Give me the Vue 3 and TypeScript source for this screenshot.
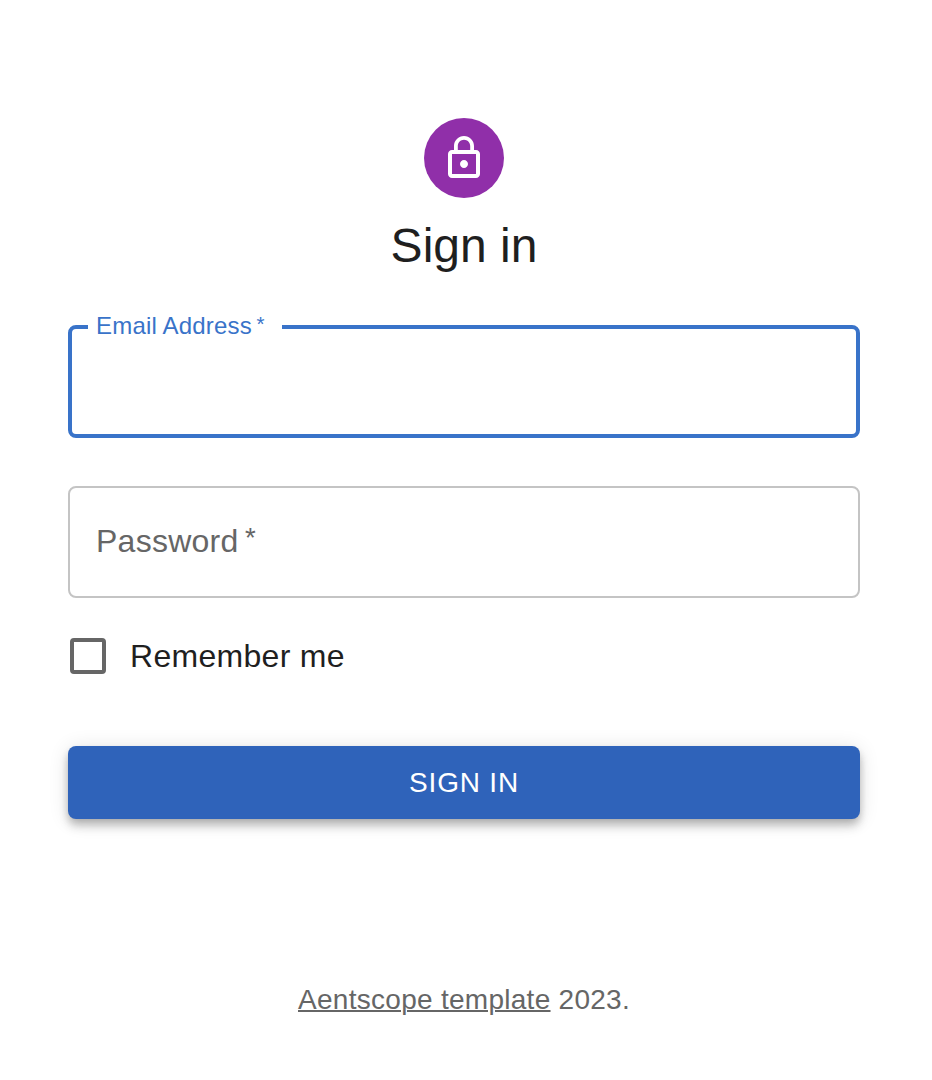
<script setup lang="ts">
import { ref } from 'vue'

const email = ref<string>('')
const password = ref<string>('')
const remember = ref<boolean>(false)
</script>

<template>
  <main class="page">
    <div class="avatar">
      <svg viewBox="0 0 24 24" aria-hidden="true">
        <path d="M12 17c1.100 0 2-.9 2-2s-.9-2-2-2-2 .9-2 2 .9 2 2 2zm6-9h-1V6c0-2.760-2.240-5-5-5S7 3.240 7 6v2H6c-1.100 0-2 .9-2 2v10c0 1.100.9 2 2 2h12c1.100 0 2-.9 2-2V10c0-1.100-.9-2-2-2zM8.900 6c0-1.710 1.390-3.100 3.100-3.100s3.100 1.390 3.100 3.100v2H8.900V6zM18 20H6V10h12v10z" />
      </svg>
    </div>
    <h1 class="title">Sign in</h1>
    <form class="form" @submit.prevent>
      <div class="field active">
        <label class="float" for="email"><span class="text">Email Address</span><span class="star">*</span></label>
        <input id="email" v-model="email" type="email" />
      </div>
      <div class="field idle">
        <label class="inside" for="password"><span class="text">Password</span><span class="star">*</span></label>
        <input id="password" v-model="password" type="password" />
      </div>
      <label class="remember">
        <input v-model="remember" class="check" type="checkbox" />
        <span class="remember-text">Remember me</span>
      </label>
      <button class="submit" type="submit"><span class="submit-text">SIGN IN</span></button>
    </form>
    <footer class="footer"><a class="link">Aentscope template</a><span class="year">2023.</span></footer>
  </main>
</template>

<style>
body {
  margin: 0;
  background: #fff;
}
</style>

<style scoped>
.page {
  box-sizing: border-box;
  width: 932px;
  height: 1080px;
  padding: 118px 72px 0 68px;
  display: flex;
  flex-direction: column;
  align-items: center;
  font-family: "Liberation Sans", Arial, sans-serif;
  color: #1f1f1f;
  overflow: hidden;
}
.avatar {
  width: 80px;
  height: 80px;
  border-radius: 50%;
  background: #902fa9;
  display: flex;
  align-items: center;
  justify-content: center;
}
.avatar svg {
  width: 48px;
  height: 48px;
  fill: #fff;
}
.title {
  margin: 16px 0 0;
  font-size: 48px;
  line-height: 64px;
  font-weight: 400;
  white-space: nowrap;
}
.form {
  width: 792px;
  margin-top: 47px;
  display: flex;
  flex-direction: column;
}
.field {
  position: relative;
  box-sizing: border-box;
  width: 100%;
  border-radius: 8px;
}
.field input {
  box-sizing: border-box;
  width: 100%;
  height: 100%;
  padding: 0 26px;
  border: 0;
  outline: 0;
  background: transparent;
  font: inherit;
  font-size: 32px;
}
.active {
  height: 113px;
  border: 4px solid #3973c9;
}
.idle {
  height: 112px;
  margin-top: 48px;
  border: 2px solid #c4c4c4;
}
.float {
  position: absolute;
  box-sizing: border-box;
  left: 16px;
  top: -18px;
  width: 194px;
  height: 30px;
  padding-left: 8px;
  background: #fff;
  color: #3973c9;
  font-size: 24px;
  line-height: 30px;
  letter-spacing: 0.19px;
  white-space: nowrap;
}
.inside {
  position: absolute;
  left: 26px;
  top: 33px;
  font-size: 32px;
  line-height: 40px;
  letter-spacing: 0.26px;
  color: #666;
  white-space: nowrap;
}
.star {
  margin-left: 0.23em;
  font-size: 0.86em;
  line-height: 1;
  vertical-align: 0.17em;
}
.remember {
  display: flex;
  align-items: center;
  height: 48px;
  margin: 34px 0 0 2px;
}
.check {
  appearance: none;
  box-sizing: border-box;
  width: 36px;
  height: 36px;
  margin: 0;
  border: 4px solid #666;
  border-radius: 4px;
}
.remember-text {
  margin-left: 24px;
  font-size: 32px;
  letter-spacing: 0.3px;
}
.submit {
  height: 73px;
  margin-top: 66px;
  padding: 0;
  border: 0;
  border-radius: 8px;
  background: #2f63ba;
  color: #fff;
  font-family: inherit;
  font-size: 28px;
  line-height: 49px;
  letter-spacing: 0.8px;
  box-shadow: 0 4px 8px -2px rgba(0, 0, 0, 0.2), 0 8px 10px rgba(0, 0, 0, 0.14), 0 2px 20px rgba(0, 0, 0, 0.12);
}
.footer {
  margin-top: 161px;
  display: flex;
  gap: 8px;
  font-size: 28px;
  line-height: 40px;
  letter-spacing: 0.28px;
  color: #666;
  white-space: nowrap;
}
.link {
  text-decoration: underline;
  text-decoration-thickness: 2px;
}
</style>
